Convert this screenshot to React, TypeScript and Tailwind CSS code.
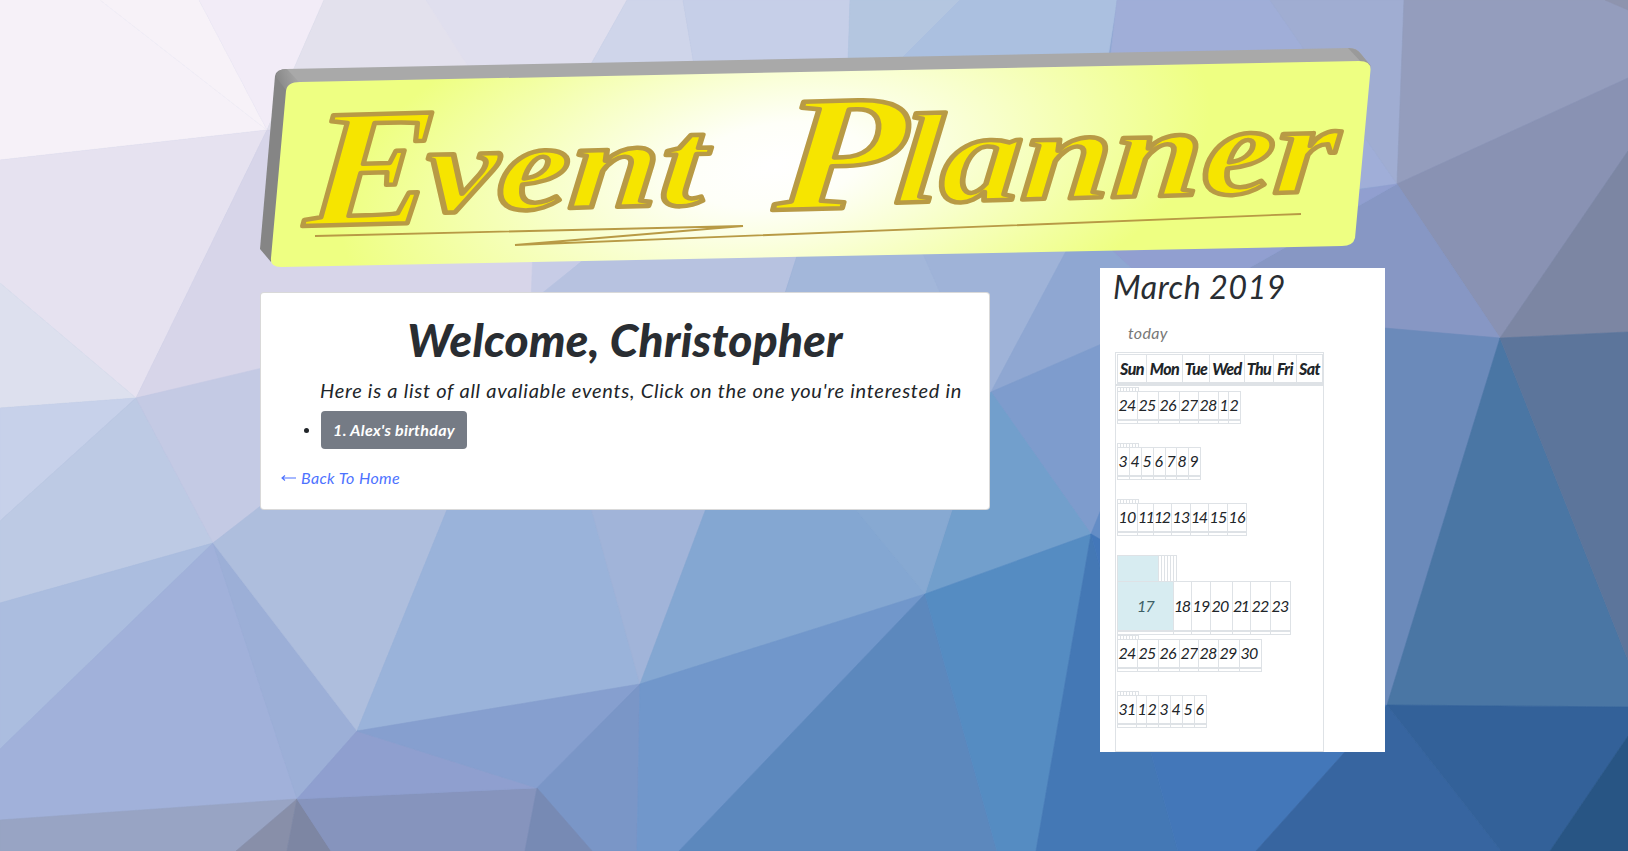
import React from "react";

const FACETS: [string, string][] = [
  ["#f6f1f8", "0,0 100,0 267,130 0,160"],
  ["#f7f2f8", "100,0 199,0 267,130"],
  ["#f2ecf7", "199,0 324,0 267,130"],
  ["#e3e1ed", "324,0 426,0 560,180 267,130"],
  ["#e0dfee", "426,0 627,0 540,155 540,180"],
  ["#cfd5ea", "627,0 683,0 710,160 540,155"],
  ["#c6cfe8", "683,0 850,0 845,160 710,160"],
  ["#b4c6e0", "850,0 960,0 800,160 845,160"],
  ["#abc0e0", "960,0 1117,0 1092,160 800,160"],
  ["#a0aed8", "1117,0 1270,0 1397,184 1092,220"],
  ["#a0add2", "1270,0 1404,0 1397,184"],
  ["#949dbd", "1404,0 1628,0 1628,78 1397,184"],
  ["#8e94ae", "1605,0 1628,0 1628,10"],
  ["#8992b3", "1628,78 1628,151 1500,338 1397,184"],
  ["#7c86a3", "1628,151 1628,332 1500,338"],
  ["#8797c4", "1397,184 1500,338 1100,311 1249,268"],
  ["#919fd0", "1397,184 1249,268 1131,268 1090,230"],
  ["#e6e2f0", "0,160 267,130 136,398 0,283"],
  ["#dde0ee", "0,283 136,398 0,408"],
  ["#d7d5e9", "267,130 540,160 533,292 533,310 136,398"],
  ["#c7cce6", "533,250 600,246 545,292 531,300"],
  ["#b7c2e0", "581,262 598,240 802,240 785,292 780,310 531,310 531,302"],
  ["#a3b7da", "802,240 917,240 948,310 780,310"],
  ["#9fb3d8", "917,240 1072,240 991,392 948,310"],
  ["#8fa7d2", "1072,240 1100,240 1150,285 1150,323 991,392"],
  ["#7e9ccd", "991,392 1150,323 1150,420 1091,534"],
  ["#729fcc", "991,392 1091,534 925,594"],
  ["#c7d1ea", "0,408 136,398 0,521"],
  ["#bdcae4", "136,398 213,543 0,603 0,521"],
  ["#c4cae4", "136,398 300,359 300,477 213,543"],
  ["#abbddf", "0,603 213,543 0,749"],
  ["#a1b1da", "213,543 297,799 0,820 0,749"],
  ["#9cafd7", "213,543 357,731 297,799"],
  ["#aebedd", "213,543 281,490 455,490 357,731"],
  ["#9ab3da", "455,490 586,490 640,684 357,731"],
  ["#a1b4d9", "586,490 713,490 640,684"],
  ["#84a7d2", "713,490 840,490 925,594 640,684"],
  ["#87a9d2", "840,490 958,490 925,594"],
  ["#98a4c4", "0,820 297,799 236,851 0,851"],
  ["#888fa9", "297,799 287,851 236,851"],
  ["#7d86a3", "297,799 331,851 287,851"],
  ["#8694bd", "297,799 537,788 525,851 331,851"],
  ["#8f9fcf", "357,731 537,788 297,799"],
  ["#869fcf", "357,731 640,684 537,788"],
  ["#7a96c7", "640,684 637,851 592,851 537,788"],
  ["#778ab4", "537,788 592,851 525,851"],
  ["#7197cb", "640,684 925,594 679,851 637,851"],
  ["#5c88bd", "925,594 997,851 679,851"],
  ["#558cc2", "925,594 1091,534 1036,851 997,851"],
  ["#4478b5", "1091,534 1178,851 1036,851"],
  ["#648dc6", "1091,534 1120,463 1200,520 1387,705"],
  ["#4377b9", "1091,534 1387,705 1256,851 1178,851"],
  ["#6b8aba", "1350,325 1500,338 1387,705 1350,690"],
  ["#4a76a4", "1500,338 1628,660 1628,707 1387,705"],
  ["#5c759b", "1500,338 1628,332 1628,660"],
  ["#3765a0", "1387,705 1501,851 1256,851"],
  ["#336199", "1387,705 1628,707 1628,736 1550,851 1501,851"],
  ["#285584", "1628,736 1628,851 1550,851"],
];

function Backdrop() {
  return (
    <svg className="absolute inset-0" width="1628" height="851" viewBox="0 0 1628 851" aria-hidden="true">
      <rect width="1628" height="851" fill="#8fa7d2" />
      {FACETS.map(([fill, points]) => (
        <polygon key={points} points={points} fill={fill} stroke={fill} strokeWidth="0.6" />
      ))}
    </svg>
  );
}

function Banner() {
  const letters = {
    fontFamily: '"Liberation Serif", serif',
    fontStyle: "italic",
    fontWeight: 700,
    fill: "#f6e500",
    stroke: "#b89a45",
    strokeWidth: 4.5,
    strokeLinejoin: "round" as const,
  };
  return (
    <svg className="relative mt-[46px] ml-[259px] block h-[222px] w-[1112px] shrink-0" viewBox="259 46 1112 222">
      <defs>
        <radialGradient
          id="glow"
          gradientUnits="userSpaceOnUse"
          cx="0"
          cy="0"
          r="1"
          gradientTransform="translate(775 165) skewX(-28) scale(420 215)"
        >
          <stop offset="0" stopColor="#ffffff" />
          <stop offset="0.2" stopColor="#fefff8" />
          <stop offset="1" stopColor="#eeff82" />
        </radialGradient>
        <linearGradient id="corner" x1="275" y1="80" x2="298" y2="72" gradientUnits="userSpaceOnUse">
          <stop offset="0" stopColor="#858585" />
          <stop offset="1" stopColor="#a9a9a9" />
        </linearGradient>
      </defs>
      <path d="M275 76Q276 69 287 69L300 90L271 262L260 249Z" fill="#858585" />
      <path d="M286 69L1350 48Q1357 48 1361 54L1371 67L1340 75L290 92Z" fill="#a9a9a9" />
      <path d="M276 77Q276 69 287 69L299 82L286 90Z" fill="url(#corner)" />
      <path d="M1348 48Q1357 48 1361 54L1371 66L1361 62Z" fill="#9a9a9a" />
      <path
        d="M286 91Q287 82 300 82L1359 61Q1371 61 1370.500 70L1355 238Q1353 246 1342 246L281 267Q270 267 271 258Z"
        fill="url(#glow)"
      />
      <g {...letters}>
        <text transform="translate(304 226) rotate(-1.5) skewX(-6)" fontSize="168">
          <tspan textLength="128" lengthAdjust="spacingAndGlyphs">E</tspan>
          <tspan dx="-10" dy="-11" fontSize="124" textLength="280" lengthAdjust="spacingAndGlyphs">vent</tspan>
        </text>
        <text transform="translate(773 210) rotate(-1.5) skewX(-6)" fontSize="164">
          <tspan textLength="128" lengthAdjust="spacingAndGlyphs">P</tspan>
          <tspan dx="-8" dy="-4" fontSize="128" textLength="442" lengthAdjust="spacingAndGlyphs">lanner</tspan>
        </text>
      </g>
      <path d="M315 236L743 226L515 245L1301 214" fill="none" stroke="#b89a45" strokeWidth="1.8" />
    </svg>
  );
}

function EventsCard() {
  return (
    <section className="relative mt-6 ml-[260px] h-[218px] w-[730px] rounded border border-black/15 bg-white px-5 pt-5 text-[#212529]">
      <h1 className="h-[57px] text-center text-[46px] leading-[54px] font-black whitespace-nowrap tracking-[0.25px] text-[#292d32]">
        Welcome, Christopher
      </h1>
      <ul className="list-none pl-10">
        <li className="-ml-px mt-[5px] h-[36px] text-[20px] leading-[30px] tracking-[0.73px] whitespace-nowrap">
          Here is a list of all avaliable events, Click on the one you're interested in
        </li>
        <li className="-ml-[17px] flex items-center gap-[12px]">
          <span className="h-[5px] w-[5px] rounded-full bg-[#212529]" />
          <button className="h-[38px] w-[146px] rounded bg-[#757b85] text-[16px] font-bold tracking-[0.3px] whitespace-nowrap text-white">
            1. Alex's birthday
          </button>
        </li>
      </ul>
      <a className="mt-[17px] flex items-center gap-[5px] text-[16px] leading-6 text-[#4d72ff]">
        <svg width="15" height="8" viewBox="0 0 15 8" fill="none" stroke="currentColor" strokeWidth="1.100">
          <path d="M15 4H1M4 1.500L1 4L4 6.500" />
        </svg>
        <span className="tracking-[0.38px]">Back To Home</span>
      </a>
    </section>
  );
}

type Week = { days: number[]; widths: number[]; today?: boolean };

const HEADS: [string, number][] = [
  ["Sun", 29],
  ["Mon", 36],
  ["Tue", 27],
  ["Wed", 35],
  ["Thu", 29],
  ["Fri", 23],
  ["Sat", 26],
];

const WEEKS: Week[] = [
  { days: [24, 25, 26, 27, 28, 1, 2], widths: [20, 21, 21, 19, 20, 10, 12] },
  { days: [3, 4, 5, 6, 7, 8, 9], widths: [12, 12, 12, 12, 11, 12, 12] },
  { days: [10, 11, 12, 13, 14, 15, 16], widths: [20, 16, 18, 19, 18, 19, 19] },
  { days: [17, 18, 19, 20, 21, 22, 23], widths: [56, 18, 19, 22, 18, 20, 20], today: true },
  { days: [24, 25, 26, 27, 28, 29, 30], widths: [20, 21, 21, 19, 20, 21, 22] },
  { days: [31, 1, 2, 3, 4, 5, 6], widths: [19, 10, 12, 12, 12, 12, 12] },
];

function WeekRow({ week }: { week: Week }) {
  const today = week.today === true;
  return (
    <div className={today ? "h-[80px]" : "h-[56px]"}>
      <div className={"flex w-max border-t border-r border-[#dee2e6] " + (today ? "h-[26px]" : "h-[4px]")}>
        {week.days.map((day, i) => (
          <div
            key={day}
            className={"border-l border-[#dee2e6] " + (today && i === 0 ? "w-[41px] bg-[#d7ecf1]" : "w-[3px]")}
          />
        ))}
      </div>
      <div className="w-max border border-l-0 border-[#dee2e6]">
        <div className={"flex border-b-2 border-[#dee2e6] " + (today ? "h-[50px]" : "h-[29px]")}>
          {week.days.map((day, i) => (
            <div
              key={day}
              style={{ width: week.widths[i] }}
              className={
                "flex items-center border-l border-[#dee2e6] text-[16px] leading-none " +
                (today && i === 0
                  ? "justify-center bg-[#d7ecf1] tracking-[-0.9px] text-[#3d5f66]"
                  : week.widths[i] < 19 && day > 9
                    ? "justify-start pb-px tracking-[-1.6px]"
                    : "justify-start pb-px pl-[0.5px] tracking-[-0.9px]")
              }
            >
              {day}
            </div>
          ))}
        </div>
        <div className="flex h-[2px]">
          {week.days.map((day, i) => (
            <div key={day} style={{ width: week.widths[i] }} className="border-l border-[#dee2e6]" />
          ))}
        </div>
      </div>
    </div>
  );
}

function Calendar() {
  return (
    <aside className="relative ml-[110px] h-[484px] w-[285px] bg-white pl-[15px] text-[#212529]">
      <h2 className="-ml-[2px] h-[46px] text-[32px] leading-[37px] tracking-[0.6px] whitespace-nowrap text-[#292d32]">
        March 2019
      </h2>
      <div className="h-[38px] pl-[13px] pt-[7px] text-[16px] leading-6 tracking-[0.3px] text-[#777777]">today</div>
      <div className="h-[400px] w-[209px] border border-[#dee2e6]">
        <div className="h-[33px] border-b-2 border-[#dee2e6] pt-px pl-px">
          <div className="flex h-[30px] w-max border-t border-r border-b-2 border-[#dee2e6]">
            {HEADS.map(([name, width]) => (
              <div
                key={name}
                style={{ width }}
                className="flex items-center justify-center border-l border-[#dee2e6] text-[16px] font-black tracking-[-0.6px]"
              >
                {name}
              </div>
            ))}
          </div>
        </div>
        <div className="pt-px pl-px">
          {WEEKS.map((week, i) => (
            <WeekRow key={i} week={week} />
          ))}
        </div>
      </div>
    </aside>
  );
}

export default function App() {
  return (
    <div className="relative h-[851px] w-[1628px] overflow-hidden font-['Lato',sans-serif] italic">
      <Backdrop />
      <Banner />
      <main className="flex items-start">
        <EventsCard />
        <Calendar />
      </main>
    </div>
  );
}
